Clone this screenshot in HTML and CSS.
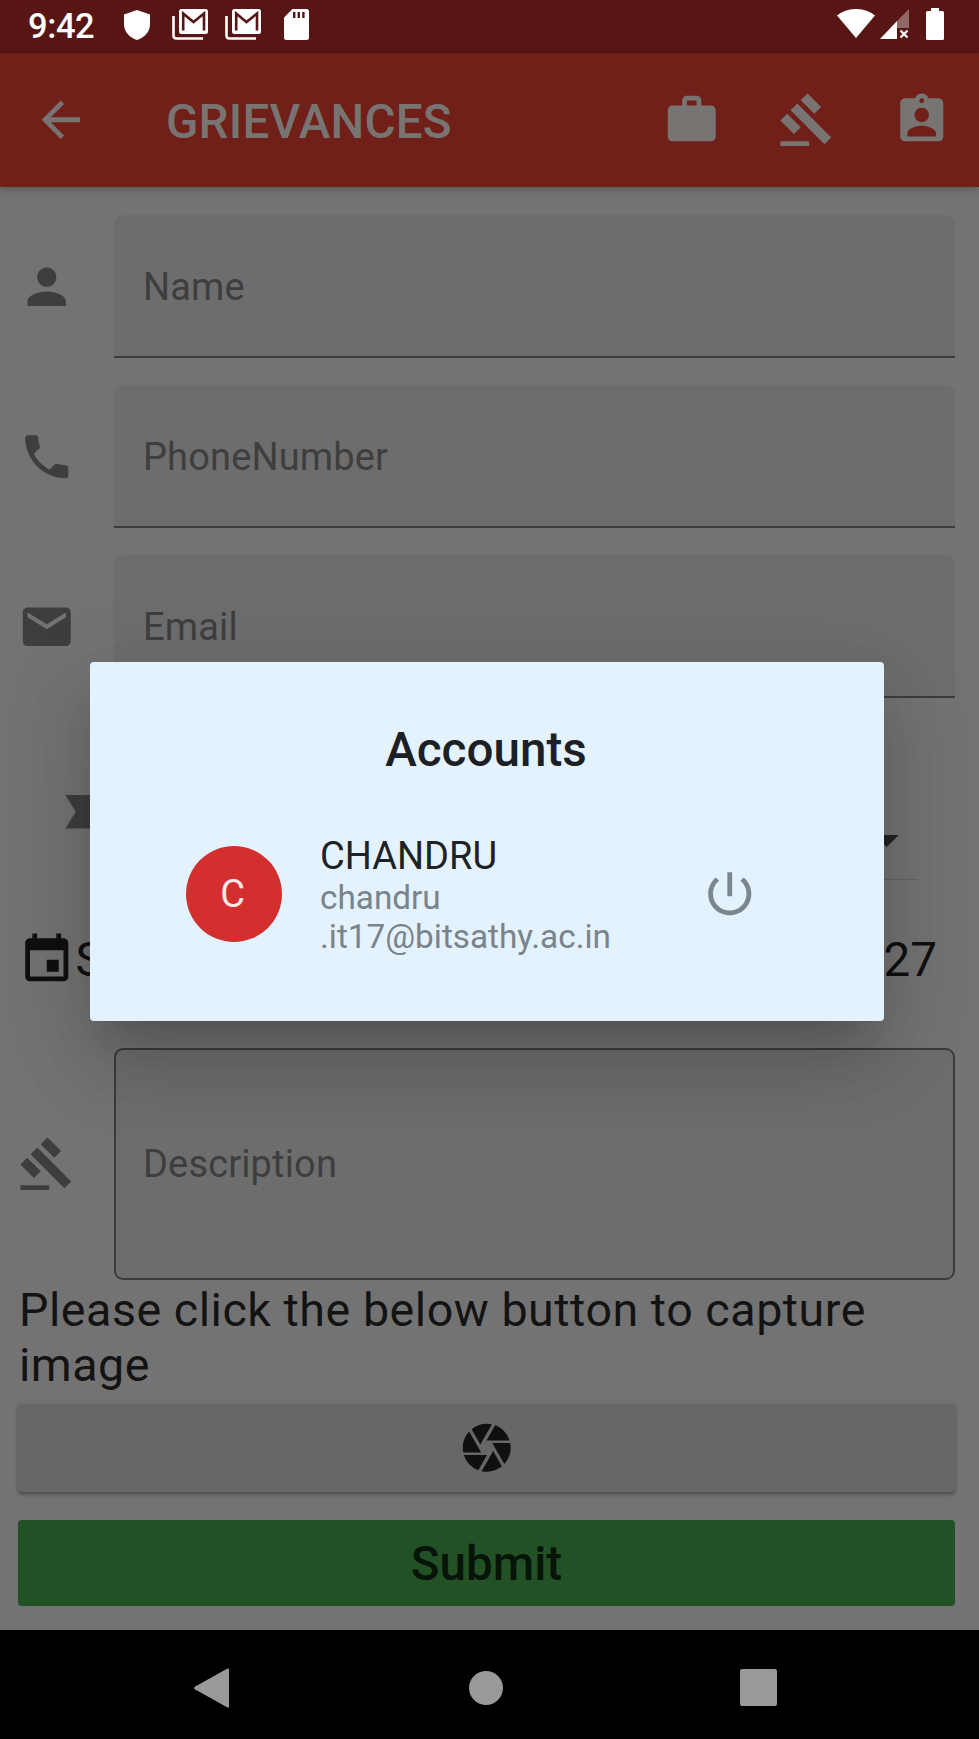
FILE: index.html
```html
<!DOCTYPE html>
<html lang="en">
<head>
<meta charset="utf-8">
<title>Grievances</title>
<link rel="stylesheet" href="styles.css">
</head>
<body>
<svg class="defs" aria-hidden="true">
  <symbol id="gavel" viewBox="0 0 24 24"><path d="M1 21h12v2H1zM5.245 8.07l2.83-2.827 14.14 14.142-2.828 2.828zM12.317 1l5.657 5.656-2.83 2.83-5.654-5.66zM3.825 9.485l5.657 5.657-2.828 2.828-5.657-5.657z"/></symbol>
  <symbol id="mails" viewBox="0 0 36 31"><path fill="none" stroke="currentColor" stroke-width="2.600" d="M1.500 7v19.500q0 3 3 3H31"/><rect x="7" y="0" width="29" height="25" rx="2.500"/><path class="cut" d="M11.200 21.500V4.500L21.500 13 32 4.500v17" fill="none" stroke-width="2.600"/></symbol>
</svg>
<div class="phone">
  <header class="status">
    <span class="clock">9:42</span>
    <svg class="shield" viewBox="0 0 26 30"><path d="M13 0 26 4.500V14c0 8-5.500 13.500-13 16C5.500 27.500 0 22 0 14V4.500z"/></svg>
    <svg class="mails" viewBox="0 0 36 31"><use href="#mails"/></svg>
    <svg class="mails" viewBox="0 0 36 31"><use href="#mails"/></svg>
    <svg class="sd" viewBox="0 0 25 31"><path d="M8.500 0H22.500Q25 0 25 2.500V28.500Q25 31 22.500 31H2.500Q0 31 0 28.500V8.500z"/><path class="cut" stroke-width="2.400" d="M10.200 3v6M14.800 3v6M19.400 3v6"/></svg>
    <span class="spacer"></span>
    <svg class="wifi" viewBox="0 0 38 29"><path d="M19 29 0 6.500C11-2.200 27-2.200 38 6.500z"/></svg>
    <svg class="signal" viewBox="0 0 30 30"><path opacity=".35" d="M29 0v19H17V12z"/><path d="M17 12v18H0z"/><path d="M20.500 21.500l7 7M27.500 21.500l-7 7" stroke="#fff" stroke-width="2.200"/></svg>
    <svg class="battery" viewBox="0 0 18 32"><path d="M5 0h8v3h3.500Q18 3 18 4.500v26q0 1.500-1.500 1.500h-15Q0 32 0 30.500v-26Q0 3 1.500 3H5z"/></svg>
  </header>
  <div class="appbar">
    <svg class="icon" viewBox="0 0 24 24"><path d="M20 11H7.830l5.590-5.590L12 4l-8 8 8 8 1.410-1.410L7.830 13H20v-2z"/></svg>
    <h1 class="title">GRIEVANCES</h1>
    <svg class="icon" viewBox="0 0 24 24"><path d="M20 6h-4V4c0-1.110-.890-2-2-2h-4c-1.110 0-2 .890-2 2v2H4c-1.110 0-1.990.890-1.990 2L2 19c0 1.110.890 2 2 2h16c1.110 0 2-.890 2-2V8c0-1.110-.890-2-2-2zm-6 0h-4V4h4v2z"/></svg>
    <svg class="icon" viewBox="0 0 24 24"><use href="#gavel"/></svg>
    <svg class="icon" viewBox="0 0 24 24"><path d="M19 3h-4.180C14.400 1.840 13.300 1 12 1c-1.300 0-2.400.840-2.820 2H5c-1.100 0-2 .900-2 2v14c0 1.100.900 2 2 2h14c1.100 0 2-.900 2-2V5c0-1.100-.900-2-2-2zm-7 0c.550 0 1 .450 1 1s-.450 1-1 1-1-.450-1-1 .450-1 1-1zm0 4c1.660 0 3 1.340 3 3s-1.340 3-3 3-3-1.340-3-3 1.340-3 3-3zm6 12H6v-1.400c0-2 4-3.100 6-3.100s6 1.100 6 3.100V19z"/></svg>
  </div>
  <main class="form">
    <div class="row">
      <svg class="icon" viewBox="0 0 24 24"><path d="M12 12c2.210 0 4-1.790 4-4s-1.790-4-4-4-4 1.790-4 4 1.790 4 4 4zm0 2c-2.670 0-8 1.340-8 4v2h16v-2c0-2.660-5.330-4-8-4z"/></svg>
      <div class="field">Name</div>
    </div>
    <div class="row">
      <svg class="icon" viewBox="0 0 24 24"><path d="M6.620 10.790c1.440 2.830 3.760 5.140 6.590 6.590l2.200-2.200c.270-.270.670-.360 1.020-.240 1.120.370 2.330.570 3.570.570.550 0 1 .450 1 1V20c0 .550-.450 1-1 1-9.390 0-17-7.610-17-17 0-.550.450-1 1-1h3.500c.550 0 1 .450 1 1 0 1.250.200 2.450.570 3.570.110.350.030.740-.250 1.020l-2.200 2.200z"/></svg>
      <div class="field">PhoneNumber</div>
    </div>
    <div class="row">
      <svg class="icon" viewBox="0 0 24 24"><path d="M20 4H4c-1.100 0-1.990.900-1.990 2L2 18c0 1.100.900 2 2 2h16c1.100 0 2-.900 2-2V6c0-1.100-.900-2-2-2zm0 4l-8 5-8-5V6l8 5 8-5v2z"/></svg>
      <div class="field">Email</div>
    </div>
    <div class="picker">
      <svg class="icon" viewBox="0 0 24 24"><path d="M3.500 18.990l11 .010c.670 0 1.270-.330 1.630-.840L20.500 12l-4.370-6.160c-.360-.510-.960-.840-1.630-.840l-11 .010L7.840 12 3.500 18.990z"/></svg>
      <div class="select"><svg class="icon caret" viewBox="0 0 24 24"><path d="M7 10l5 5 5-5z"/></svg></div>
    </div>
    <div class="date">
      <svg class="icon" viewBox="0 0 24 24"><path d="M17 12h-5v5h5v-5zM16 1v2H8V1H6v2H5c-1.110 0-1.990.900-1.990 2L3 19c0 1.100.890 2 2 2h14c1.100 0 2-.900 2-2V5c0-1.100-.900-2-2-2h-1V1h-2zm3 18H5V8h14v11z"/></svg>
      <span>S</span><span class="day">27</span>
    </div>
    <div class="row">
      <svg class="icon" viewBox="0 0 24 24"><use href="#gavel"/></svg>
      <div class="area">Description</div>
    </div>
    <p class="hint">Please click the below button to capture image</p>
    <div class="capture"><svg class="icon" viewBox="0 0 24 24"><path d="M9.400 10.500l4.770-8.260C13.470 2.090 12.750 2 12 2c-2.400 0-4.600.850-6.320 2.250l3.660 6.350.060-.100zM21.540 9c-.920-2.920-3.150-5.260-6-6.340L11.880 9h9.660zm.260 1h-7.490l.290.500 4.760 8.250C21 16.970 22 14.610 22 12c0-.690-.070-1.350-.200-2zM8.540 12l-3.900-6.750C3.010 7.030 2 9.390 2 12c0 .690.070 1.350.200 2h7.490l-1.150-2zm-6.080 3c.920 2.920 3.150 5.260 6 6.340L12.120 15H2.460zm11.270 0l-3.900 6.760c.700.150 1.420.240 2.170.240 2.400 0 4.600-.850 6.320-2.250l-3.660-6.350-.930 1.600z"/></svg></div>
    <div class="submit">Submit</div>
  </main>
  <nav class="nav">
    <svg class="back" viewBox="0 0 35 40"><path d="M35 1.500v37q0 1.500-1.500 1L.8 21.300q-1.300-1.300 0-2.600L33.500.5Q35 0 35 1.500z"/></svg>
    <span class="home"></span>
    <span class="recent"></span>
  </nav>
  <section class="dialog">
    <h2 class="heading">Accounts</h2>
    <div class="account">
      <span class="avatar">C</span>
      <div class="who">
        <div class="name">CHANDRU</div>
        <div class="mail">chandru<br>.it17@bitsathy.ac.in</div>
      </div>
      <svg class="icon power" viewBox="0 0 24 24"><path d="M13 3h-2v10h2V3zm4.830 2.170l-1.420 1.420C17.990 7.860 19 9.810 19 12c0 3.870-3.130 7-7 7s-7-3.130-7-7c0-2.190 1.010-4.140 2.580-5.420L6.170 5.170C4.230 6.820 3 9.260 3 12c0 4.970 4.030 9 9 9s9-4.030 9-9c0-2.740-1.230-5.180-3.170-6.830z"/></svg>
    </div>
  </section>
</div>
</body>
</html>
```

FILE: styles.css
```css
* { box-sizing: border-box; margin: 0; padding: 0; }
body { font-family: Roboto, "Liberation Sans", sans-serif; background: #737373; }
svg { display: block; flex: none; fill: currentColor; }
.defs { position: absolute; width: 0; height: 0; }
.phone { position: relative; width: 979px; height: 1739px; display: flex; flex-direction: column; overflow: hidden; }
.icon { width: 57.500px; height: 57.500px; }

.status { height: 53px; flex: none; background: #571614; color: #fff; display: flex; align-items: flex-start; padding: 9px 35px 0 28px; }
.clock { width: 96px; font-size: 34.500px; font-weight: 500; line-height: 34px; letter-spacing: -.4px; }
.cut { stroke: #571614; }
.shield { width: 26px; height: 30px; margin: 1px 22px 0 0; }
.mails { width: 36px; height: 31px; margin-right: 17px; }
.sd { width: 25px; height: 31px; margin-left: 6px; }
.spacer { flex: 1; }
.wifi { width: 38px; height: 29px; margin-right: 5px; }
.signal { width: 30px; height: 30px; margin-right: 16px; }
.battery { width: 18px; height: 32px; margin-top: -1px; }

.appbar { position: relative; height: 134px; flex: none; background: #701f19; color: #787472; display: flex; align-items: center; padding: 0 29px 0 32px; box-shadow: 0 2px 7px rgba(0,0,0,.25); gap: 57.500px; }
.title { flex: 1; margin-left: 19px; padding-top: 3px; font-size: 47.600px; font-weight: 500; letter-spacing: .2px; }

.form { height: 1443px; flex: none; display: flex; flex-direction: column; padding: 28px 24px 0 18px; color: #3e3e3e; }
.row { display: flex; align-items: center; gap: 38.500px; margin-bottom: 27px; }
.field { flex: 1; height: 143px; display: flex; align-items: center; padding: 3px 0 0 29px; font-size: 38px; letter-spacing: .15px; background: #6d6d6d; border-bottom: 2px solid #3c3c3c; border-radius: 9px 9px 0 0; }
.picker { display: flex; align-items: flex-start; height: 182px; margin-top: -27px; padding: 85px 37px 0 39px; }
.select { flex: 1; height: 97px; margin-left: 15px; display: flex; justify-content: flex-end; padding: 28px 3px 0 0; border-bottom: 1px solid #646464; }
.caret { color: #222; }
.date { height: 159px; margin-bottom: 9px; display: flex; align-items: center; font-size: 47.600px; color: #101010; }
.day { margin-left: auto; padding-right: 18px; }
.area { flex: 1; height: 232px; display: flex; align-items: center; padding-left: 27px; font-size: 38px; letter-spacing: .15px; background: #6d6d6d; border: 2px solid #3b3b3b; border-radius: 9px; }
.hint { margin: -24px 0 0 1px; font-size: 46.600px; line-height: 55px; letter-spacing: .53px; color: #131313; height: 121px; }
.capture { height: 88px; margin-bottom: 28px; display: flex; align-items: center; justify-content: center; background: #676767; color: #101010; border-radius: 4px; box-shadow: 0 3px 3px rgba(0,0,0,.22), 0 1px 5px rgba(0,0,0,.14); }
.submit { height: 86px; display: flex; align-items: center; justify-content: center; background: #235126; color: #071408; border-radius: 4px; font-size: 47.600px; font-weight: 500; padding-top: 2px; }

.nav { height: 109px; flex: none; background: #000; color: #999; display: flex; align-items: center; justify-content: space-between; padding: 6px 202px 0 194px; }
.back { width: 35px; height: 40px; }
.home { width: 34px; height: 34px; margin-left: 3px; border-radius: 50%; background: #999; }
.recent { width: 37px; height: 37px; border-radius: 2px; background: #999; }

.dialog { position: absolute; left: 90px; top: 662px; width: 794px; height: 359px; border-radius: 4px; background: #e3f2fd; box-shadow: 0 26px 36px -17px rgba(0,0,0,.17), 0 50px 80px 2px rgba(0,0,0,.1), 0 21px 90px 12px rgba(0,0,0,.09); }
.heading { height: 56px; margin-top: 60px; padding-right: 2px; text-align: center; font-size: 47.600px; line-height: 56px; font-weight: 500; color: #1c2024; }
.account { display: flex; align-items: center; margin-top: 56px; padding: 0 126px 0 95.500px; }
.avatar { width: 96px; height: 96px; margin-top: -2px; border-radius: 50%; background: #d32f2f; color: #fce8e8; font-size: 38px; display: flex; align-items: center; justify-content: center; padding-right: 2px; }
.who { flex: 1; margin-left: 38.500px; }
.name { font-size: 38px; line-height: 44px; color: #1d2227; }
.mail { font-size: 33.300px; line-height: 39px; color: #78838b; }
.power { color: #7b8790; margin-top: -2px; }
```
